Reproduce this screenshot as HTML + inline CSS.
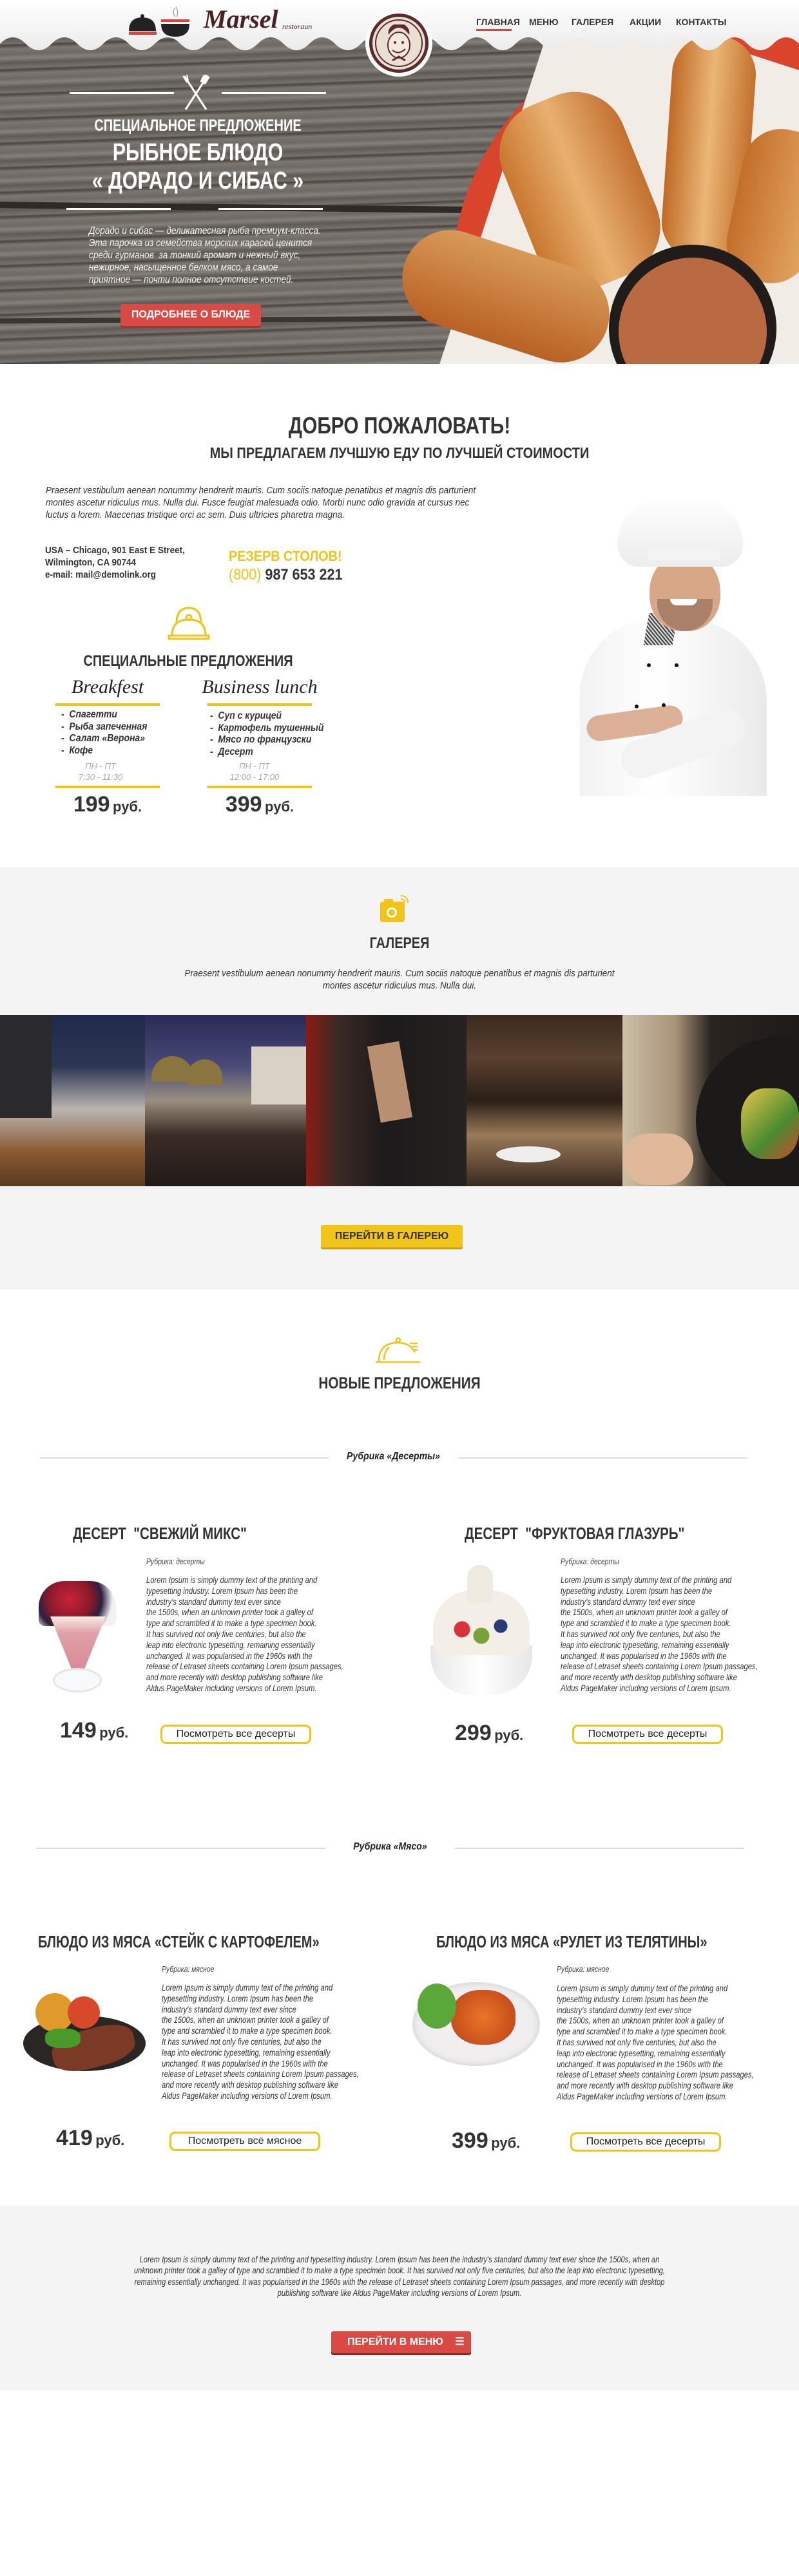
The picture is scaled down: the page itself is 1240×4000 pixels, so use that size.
<!DOCTYPE html>
<html><head><meta charset="utf-8">
<style>
*{margin:0;padding:0;box-sizing:border-box}
body{width:1240px;height:4000px;position:relative;background:#fff;font-family:"Liberation Sans Narrow","Liberation Sans",sans-serif;color:#333;overflow:hidden}
.a{position:absolute}
.c{text-align:center}
.b{font-weight:bold}
.i{font-style:italic}
.ttl{font-weight:bold;color:#333;white-space:nowrap}
.lorem{font-style:italic;font-size:14px;line-height:16.8px;color:#333;white-space:nowrap;transform:scaleX(.8);transform-origin:left top}
.btnY{border:3px solid #f0c419;border-radius:9px;font-size:16px;color:#222;text-align:center;line-height:24px;height:30px}
.price{font-weight:bold;color:#333;white-space:nowrap}
.price b{font-size:34px}
.price span{font-size:22px}
.rub{height:2px;background:#ddd}
.nl{transform-origin:left top}
.nc{transform-origin:center top}
</style></head><body>

<!-- HERO -->
<div class="a" style="left:0;top:0;width:1240px;height:565px;background:#726c66;overflow:hidden">
  <div class="a" style="inset:0;background:repeating-linear-gradient(178deg,#7d7771 0,#6f6963 9px,#858079 15px,#5f5a55 22px,#77716b 30px,#4a4540 33px,#7a746e 38px)"></div>
  <div class="a" style="left:0;top:318px;width:900px;height:10px;background:#2f2a26;transform:rotate(0.6deg)"></div>
  <div class="a" style="left:0;top:492px;width:900px;height:8px;background:#3a3531;transform:rotate(-0.3deg)"></div>
  <div class="a" style="left:700px;top:30px;width:820px;height:820px;border-radius:50%;background:#d8442c"></div>
  <div class="a" style="left:760px;top:60px;width:560px;height:620px;background:#f1ede6;transform:rotate(18deg)"></div>
  <div class="a" style="left:800px;top:145px;width:200px;height:300px;border-radius:80px;background:linear-gradient(90deg,#c9772e,#e8b070 50%,#c27030);transform:rotate(-22deg)"></div>
  <div class="a" style="left:1035px;top:55px;width:130px;height:350px;border-radius:60px;background:linear-gradient(90deg,#c06a26,#ebb676 50%,#c3702c);transform:rotate(4deg)"></div>
  <div class="a" style="left:1140px;top:200px;width:130px;height:240px;border-radius:60px;background:linear-gradient(90deg,#c46e2a,#e3a864);transform:rotate(12deg)"></div>
  <div class="a" style="left:620px;top:385px;width:330px;height:150px;border-radius:75px;background:linear-gradient(180deg,#d89a58,#b96124);transform:rotate(18deg)"></div>
  <div class="a" style="left:945px;top:380px;width:260px;height:260px;border-radius:50%;background:#1f1c1a"></div>
  <div class="a" style="left:960px;top:400px;width:230px;height:230px;border-radius:50%;background:#b96a42"></div>
</div>
<svg class="a" style="left:0;top:0" width="1240" height="90" viewBox="0 0 1240 90">
  <defs><linearGradient id="hg" x1="0" y1="0" x2="0" y2="1"><stop offset="0" stop-color="#fff"/><stop offset="1" stop-color="#ececec"/></linearGradient></defs>
  <path fill="url(#hg)" d="M0,68 Q20,48 40,68 T80,68 T120,68 T160,68 T200,68 T240,68 T280,68 T320,68 T360,68 T400,68 T440,68 T480,68 T520,68 T560,68 T600,68 T640,68 T680,68 T720,68 T760,68 T800,68 T840,68 T880,68 T920,68 T960,68 T1000,68 T1040,68 T1080,68 T1120,68 T1160,68 T1200,68 T1240,68 V0 H0 Z"/>
</svg>
<svg class="a" style="left:198px;top:8px" width="100" height="52" viewBox="0 0 100 52">
  <circle cx="23" cy="17" r="3" fill="#222"/>
  <path d="M2,40 Q2,19 23,19 Q44,19 44,40 Z" fill="#222"/>
  <rect x="2" y="41" width="43" height="5" fill="#d9443f"/>
  <rect x="52" y="22" width="44" height="4" fill="#d9443f"/>
  <path d="M52,29 H96 Q96,49 74,49 Q52,49 52,29 Z" fill="#222"/>
  <path d="M74,18 Q68,10 74,4 M76,18 Q80,11 75,3" stroke="#999" fill="none" stroke-width="1.2"/>
</svg>
<div class="a" style="left:316px;top:6px;font-family:'Liberation Serif',serif;font-style:italic;font-weight:bold;font-size:40px;color:#4a1f22">Marsel</div>
<div class="a" style="left:438px;top:34px;font-family:'Liberation Serif',serif;font-style:italic;font-size:12px;color:#4a1f22">restoraun</div>
<svg class="a" style="left:565px;top:14px" width="108" height="106" viewBox="0 0 108 106">
  <circle cx="54" cy="53" r="52" fill="#fff"/>
  <circle cx="54" cy="53" r="46" fill="#5a2a2e"/>
  <circle cx="54" cy="53" r="41" fill="#e9dfd3"/>
  <circle cx="54" cy="53" r="36" fill="none" stroke="#5a2a2e" stroke-width="2"/>
  <path d="M38,40 Q54,18 70,40 Q72,30 62,24 L46,24 Q36,30 38,40Z" fill="#5a2a2e"/>
  <ellipse cx="54" cy="56" rx="17" ry="20" fill="#f3e8db" stroke="#5a2a2e" stroke-width="2"/>
  <path d="M44,64 Q54,72 64,62" stroke="#5a2a2e" stroke-width="2" fill="none"/>
  <circle cx="48" cy="52" r="2" fill="#5a2a2e"/><circle cx="60" cy="52" r="2" fill="#5a2a2e"/>
  <path d="M44,80 L54,74 L64,80" stroke="#5a2a2e" stroke-width="3" fill="none"/>
</svg>
<div class="a b" style="left:739px;top:26px;font-size:14px;color:#333">ГЛАВНАЯ</div>
<div class="a" style="left:739px;top:45px;width:55px;height:3px;background:#d9443f"></div>
<div class="a b" style="left:821px;top:26px;font-size:14px;color:#333">МЕНЮ</div>
<div class="a b" style="left:887px;top:26px;font-size:14px;color:#333">ГАЛЕРЕЯ</div>
<div class="a b" style="left:977px;top:26px;font-size:14px;color:#333">АКЦИИ</div>
<div class="a b" style="left:1049px;top:26px;font-size:14px;color:#333">КОНТАКТЫ</div>

<div class="a" style="left:108px;top:143px;width:162px;height:3px;background:#fff"></div>
<div class="a" style="left:344px;top:143px;width:162px;height:3px;background:#fff"></div>
<svg class="a" style="left:282px;top:116px" width="44" height="56" viewBox="0 0 44 56">
  <path d="M4,2 L38,54 M40,2 L6,54" stroke="#fff" stroke-width="3"/>
  <path d="M2,2 L8,12 M8,0 L10,10" stroke="#fff" stroke-width="2"/>
  <rect x="31" y="0" width="10" height="14" rx="2" fill="#fff" transform="rotate(30 36 7)"/>
</svg>
<div class="a c nc" style="left:57px;top:181px;width:500px;font-size:25px;font-weight:bold;color:#fff;transform:scaleX(.8)">СПЕЦИАЛЬНОЕ ПРЕДЛОЖЕНИЕ</div>
<div class="a c nc" style="left:57px;top:216px;width:500px;font-size:38px;font-weight:bold;color:#fff;transform:scaleX(.8)">РЫБНОЕ БЛЮДО</div>
<div class="a c nc" style="left:57px;top:260px;width:500px;font-size:38px;font-weight:bold;color:#fff;transform:scaleX(.8)">« ДОРАДО И СИБАС »</div>
<div class="a" style="left:103px;top:323px;width:162px;height:3px;background:#fff"></div>
<div class="a" style="left:339px;top:323px;width:162px;height:3px;background:#fff"></div>
<div class="a i nl" style="left:138px;top:349px;font-size:15.5px;line-height:19px;color:#f2f2f2;white-space:nowrap;transform:scaleX(.88)">Дорадо и сибас — деликатесная рыба премиум-класса.<br>Эта парочка из семейства морских карасей ценится<br>среди гурманов&nbsp; за тонкий аромат и нежный вкус,<br>нежирное, насыщенное белком мясо, а самое<br>приятное — почти полное отсутствие костей.</div>
<div class="a c b" style="left:187px;top:472px;width:218px;height:34px;background:#d84a44;border-radius:3px;box-shadow:0 3px 0 #a8322e;color:#fff;font-size:16px;line-height:34px">ПОДРОБНЕЕ О БЛЮДЕ</div>

<!-- WELCOME -->
<div class="a c ttl nc" style="left:0;top:640px;width:1240px;font-size:36px;transform:scaleX(.83)">ДОБРО ПОЖАЛОВАТЬ!</div>
<div class="a c ttl nc" style="left:0;top:690px;width:1240px;font-size:23px;transform:scaleX(.87)">МЫ ПРЕДЛАГАЕМ ЛУЧШУЮ ЕДУ ПО ЛУЧШЕЙ СТОИМОСТИ</div>
<div class="a i nl" style="left:71px;top:753px;font-size:14.5px;line-height:19px;color:#333;white-space:nowrap;transform:scaleX(.93)">Praesent vestibulum aenean nonummy hendrerit mauris. Cum sociis natoque penatibus et magnis dis parturient<br>montes ascetur ridiculus mus. Nulla dui. Fusce feugiat malesuada odio. Morbi nunc odio gravida at cursus nec<br>luctus a lorem. Maecenas tristique orci ac sem. Duis ultricies pharetra magna.</div>
<div class="a b nl" style="left:70px;top:846px;font-size:14.5px;line-height:19px;color:#333;white-space:nowrap;transform:scaleX(.93)">USA – Chicago, 901 East E Street,<br>Wilmington, CA 90744<br>e-mail: mail@demolink.org</div>
<div class="a b nl" style="left:355px;top:851px;font-size:22px;color:#f0c419;white-space:nowrap;transform:scaleX(.9)">РЕЗЕРВ СТОЛОВ!</div>
<div class="a b nl" style="left:355px;top:879px;font-size:24px;color:#333;white-space:nowrap;transform:scaleX(.9)"><span style="color:#f0c419;font-weight:normal">(800)</span> 987 653 221</div>
<svg class="a" style="left:260px;top:940px" width="66" height="54" viewBox="0 0 66 54">
  <g fill="none" stroke="#f0c419" stroke-width="3">
    <path d="M14,28 Q14,4 33,4 Q52,4 52,28"/>
    <circle cx="33" cy="19" r="4"/>
    <path d="M7,47 Q7,22 33,22 Q59,22 59,47"/>
    <rect x="2" y="47" width="62" height="5"/>
  </g>
</svg>
<div class="a c ttl nc" style="left:92px;top:1013px;width:400px;font-size:24px;transform:scaleX(.83)">СПЕЦИАЛЬНЫЕ ПРЕДЛОЖЕНИЯ</div>
<div class="a c" style="left:86px;top:1050px;width:162px;font-family:'Liberation Serif',serif;font-style:italic;font-size:30px;color:#222">Breakfest</div>
<div class="a c" style="left:310px;top:1050px;width:186px;font-family:'Liberation Serif',serif;font-style:italic;font-size:30px;color:#222;white-space:nowrap">Business lunch</div>
<div class="a" style="left:86px;top:1092px;width:162px;height:4px;background:#f0c419"></div>
<div class="a" style="left:322px;top:1092px;width:162px;height:4px;background:#f0c419"></div>
<div class="a i b nl" style="left:95px;top:1101px;font-size:15.5px;line-height:18.7px;color:#333;white-space:nowrap;transform:scaleX(.9)">-&nbsp; Спагетти<br>-&nbsp; Рыба запеченная<br>-&nbsp; Салат «Верона»<br>-&nbsp; Кофе</div>
<div class="a i b nl" style="left:326px;top:1103px;font-size:15.5px;line-height:18.7px;color:#333;white-space:nowrap;transform:scaleX(.9)">-&nbsp; Суп с курицей<br>-&nbsp; Картофель тушенный<br>-&nbsp; Мясо по французски<br>-&nbsp; Десерт</div>
<div class="a c i" style="left:86px;top:1181px;width:140px;font-size:13px;line-height:17px;color:#aaa">ПН - ПТ<br>7:30 - 11:30</div>
<div class="a c i" style="left:322px;top:1181px;width:146px;font-size:13px;line-height:17px;color:#aaa">ПН - ПТ<br>12:00 - 17:00</div>
<div class="a" style="left:86px;top:1220px;width:162px;height:4px;background:#f0c419"></div>
<div class="a" style="left:322px;top:1220px;width:162px;height:4px;background:#f0c419"></div>
<div class="a c price" style="left:86px;top:1230px;width:162px"><b>199</b> <span>руб.</span></div>
<div class="a c price" style="left:322px;top:1230px;width:162px"><b>399</b> <span>руб.</span></div>
<!-- chef -->
<div class="a" style="left:900px;top:960px;width:290px;height:276px;background:linear-gradient(90deg,#f2f2f2,#fff 40%,#eaeaea);border-radius:120px 130px 0 0"></div>
<div class="a" style="left:1003px;top:952px;width:45px;height:50px;background:repeating-linear-gradient(45deg,#444 0 2px,#ddd 2px 4px);transform:skewX(-10deg)"></div>
<div class="a" style="left:1008px;top:858px;width:110px;height:122px;border-radius:50% 50% 45% 45%;background:#d7a787"></div>
<div class="a" style="left:1020px;top:930px;width:86px;height:50px;border-radius:0 0 45px 45px;background:#a9806a"></div>
<div class="a" style="left:1040px;top:930px;width:42px;height:10px;border-radius:0 0 20px 20px;background:#fff"></div>
<div class="a" style="left:958px;top:770px;width:195px;height:110px;border-radius:90px 90px 40px 40px;background:linear-gradient(180deg,#fff,#ececec)"></div>
<div class="a" style="left:1005px;top:852px;width:112px;height:18px;background:#f4f4f4"></div>
<div class="a" style="left:910px;top:1103px;width:150px;height:40px;border-radius:20px;background:#dcb096;transform:rotate(-8deg)"></div>
<div class="a" style="left:960px;top:1125px;width:200px;height:60px;border-radius:30px;background:#f3f3f3;transform:rotate(-20deg)"></div>
<div class="a" style="left:1004px;top:1030px;width:6px;height:6px;border-radius:50%;background:#111"></div>
<div class="a" style="left:1047px;top:1030px;width:6px;height:6px;border-radius:50%;background:#111"></div>
<div class="a" style="left:985px;top:1094px;width:6px;height:6px;border-radius:50%;background:#111"></div>
<div class="a" style="left:1027px;top:1092px;width:6px;height:6px;border-radius:50%;background:#111"></div>

<!-- GALLERY -->
<div class="a" style="left:0;top:1346px;width:1240px;height:656px;background:#f4f4f4"></div>
<svg class="a" style="left:588px;top:1390px" width="46" height="44" viewBox="0 0 46 44">
  <rect x="2" y="10" width="38" height="32" rx="4" fill="#f0c419"/>
  <rect x="8" y="6" width="14" height="6" rx="2" fill="#f0c419"/>
  <circle cx="20" cy="27" r="8" fill="#fff"/><circle cx="20" cy="27" r="5" fill="#f0c419"/>
  <path d="M34,6 Q40,6 40,12 M34,1 Q45,1 45,12" stroke="#f0c419" stroke-width="2" fill="none"/>
</svg>
<div class="a c ttl nc" style="left:0;top:1451px;width:1240px;font-size:24px;transform:scaleX(.83)">ГАЛЕРЕЯ</div>
<div class="a c i nc" style="left:0;top:1503px;width:1240px;font-size:14.5px;line-height:19px;color:#333;transform:scaleX(.93)">Praesent vestibulum aenean nonummy hendrerit mauris. Cum sociis natoque penatibus et magnis dis parturient<br>montes ascetur ridiculus mus. Nulla dui.</div>
<div class="a" style="left:0;top:1576px;width:225px;height:266px;background:linear-gradient(180deg,#1e2a4a 0,#2d3554 30%,#b9b5b0 55%,#8a5a32 80%,#5a3a20)"></div>
<div class="a" style="left:0;top:1576px;width:80px;height:160px;background:#2a2a2e"></div>
<div class="a" style="left:225px;top:1576px;width:250px;height:266px;background:linear-gradient(180deg,#2a2a55 0,#4a4a78 30%,#9a8f80 50%,#3a2c26 70%,#201a18)"></div>
<div class="a" style="left:235px;top:1640px;width:65px;height:40px;border-radius:40px 40px 0 0;background:#8a7440"></div>
<div class="a" style="left:290px;top:1645px;width:55px;height:40px;border-radius:40px 40px 0 0;background:#8a7440"></div>
<div class="a" style="left:390px;top:1625px;width:85px;height:90px;background:#d8d2c6"></div>
<div class="a" style="left:475px;top:1576px;width:249px;height:266px;background:linear-gradient(90deg,#8a1c14 0,#3a2a26 20%,#1c1a1a 50%,#252220 100%)"></div>
<div class="a" style="left:580px;top:1620px;width:50px;height:120px;background:#b98f72;transform:rotate(-10deg)"></div>
<div class="a" style="left:724px;top:1576px;width:242px;height:266px;background:linear-gradient(180deg,#3a2a1e 0,#5a4030 25%,#2a1e16 50%,#9a7a58 70%,#3a2a20)"></div>
<div class="a" style="left:770px;top:1780px;width:100px;height:25px;border-radius:50%;background:#eee"></div>
<div class="a" style="left:966px;top:1576px;width:274px;height:266px;overflow:hidden;background:linear-gradient(90deg,#cbbfa8 0,#a99478 30%,#2a2420 50%,#1e1a18)">
  <div class="a" style="left:114px;top:34px;width:260px;height:260px;border-radius:50%;background:#1c1a18"></div>
  <div class="a" style="left:184px;top:114px;width:90px;height:110px;border-radius:40%;background:linear-gradient(135deg,#e8c84a,#4a8a30 60%,#c84a2a)"></div>
  <div class="a" style="left:0;top:184px;width:110px;height:80px;border-radius:40px;background:#e0b89a"></div>
</div>
<div class="a c b" style="left:498px;top:1902px;width:220px;height:35px;background:#f0c419;border-radius:3px;box-shadow:0 3px 0 #c99f0e;font-size:16px;line-height:35px;color:#333">ПЕРЕЙТИ В ГАЛЕРЕЮ</div>

<!-- NEW OFFERS -->
<svg class="a" style="left:582px;top:2076px" width="74" height="42" viewBox="0 0 74 42">
  <g fill="none" stroke="#f0c419" stroke-width="2.5">
    <circle cx="36" cy="5" r="3"/>
    <path d="M6,38 Q6,9 36,9 Q54,9 62,24"/>
    <path d="M14,36 Q14,22 22,16"/>
    <path d="M1,39 H70"/>
    <path d="M54,10 H66 M58,15 H66 M61,20 H66"/>
  </g>
</svg>
<div class="a c ttl nc" style="left:0;top:2134px;width:1240px;font-size:25px;transform:scaleX(.83)">НОВЫЕ ПРЕДЛОЖЕНИЯ</div>

<div class="a rub" style="left:62px;top:2263px;width:448px"></div>
<div class="a rub" style="left:711px;top:2263px;width:449px"></div>
<div class="a i b c nc" style="left:510px;top:2253px;width:201px;font-size:16px;color:#222;transform:scaleX(.88)">Рубрика «Десерты»</div>

<div class="a ttl nl" style="left:113px;top:2366px;font-size:26px;transform:scaleX(.79)">ДЕСЕРТ &nbsp;"СВЕЖИЙ МИКС"</div>
<div class="a ttl nl" style="left:721px;top:2366px;font-size:26px;transform:scaleX(.79)">ДЕСЕРТ &nbsp;"ФРУКТОВАЯ ГЛАЗУРЬ"</div>

<div class="a" style="left:60px;top:2455px;width:120px;height:70px;border-radius:40px 40px 10px 10px;background:radial-gradient(circle at 40% 40%,#c8243a,#8a1a2a 40%,#2a2040 60%,#f2f2f2 80%)"></div>
<div class="a" style="left:78px;top:2510px;width:86px;height:85px;background:linear-gradient(180deg,#f6eee4,#e0a0a8 30%,#d78a96);clip-path:polygon(0 0,100% 0,60% 100%,40% 100%)"></div>
<div class="a" style="left:82px;top:2590px;width:76px;height:38px;border-radius:50%;border:3px solid #e2e6ea;background:#f7f9fa"></div>
<div class="a i nl" style="left:227px;top:2417px;font-size:13px;color:#444;transform:scaleX(.8)">Рубрика: десерты</div>
<div class="a lorem" style="left:227px;top:2445px">Lorem Ipsum is simply dummy text of the printing and<br>typesetting industry. Lorem Ipsum has been the<br>industry's standard dummy text ever since<br>the 1500s, when an unknown printer took a galley of<br>type and scrambled it to make a type specimen book.<br>It has survived not only five centuries, but also the<br>leap into electronic typesetting, remaining essentially<br>unchanged. It was popularised in the 1960s with the<br>release of Letraset sheets containing Lorem Ipsum passages,<br>and more recently with desktop publishing software like<br>Aldus PageMaker including versions of Lorem Ipsum.</div>
<div class="a" style="left:668px;top:2555px;width:158px;height:76px;border-radius:0 0 60px 60px;background:linear-gradient(90deg,#e8e8e8,#fff 50%,#e6e6e6)"></div>
<div class="a" style="left:672px;top:2470px;width:150px;height:100px;border-radius:60px 60px 20px 20px;background:radial-gradient(circle at 30% 60%,#d8323a 0 12px,transparent 13px),radial-gradient(circle at 70% 55%,#2a3a78 0 10px,transparent 11px),radial-gradient(circle at 50% 70%,#7aa23a 0 12px,transparent 13px),#f3efe6"></div>
<div class="a" style="left:725px;top:2430px;width:40px;height:60px;border-radius:20px 20px 10px 10px;background:#efeadf"></div>
<div class="a i nl" style="left:870px;top:2417px;font-size:13px;color:#444;transform:scaleX(.8)">Рубрика: десерты</div>
<div class="a lorem" style="left:870px;top:2445px">Lorem Ipsum is simply dummy text of the printing and<br>typesetting industry. Lorem Ipsum has been the<br>industry's standard dummy text ever since<br>the 1500s, when an unknown printer took a galley of<br>type and scrambled it to make a type specimen book.<br>It has survived not only five centuries, but also the<br>leap into electronic typesetting, remaining essentially<br>unchanged. It was popularised in the 1960s with the<br>release of Letraset sheets containing Lorem Ipsum passages,<br>and more recently with desktop publishing software like<br>Aldus PageMaker including versions of Lorem Ipsum.</div>

<div class="a price" style="left:93px;top:2668px"><b>149</b> <span>руб.</span></div>
<div class="a btnY" style="left:249px;top:2678px;width:234px">Посмотреть все десерты</div>
<div class="a price" style="left:706px;top:2672px"><b>299</b> <span>руб.</span></div>
<div class="a btnY" style="left:888px;top:2678px;width:234px">Посмотреть все десерты</div>

<!-- MEAT -->
<div class="a rub" style="left:56px;top:2869px;width:449px"></div>
<div class="a rub" style="left:706px;top:2869px;width:449px"></div>
<div class="a i b c nc" style="left:505px;top:2859px;width:201px;font-size:16px;color:#222;transform:scaleX(.88)">Рубрика «Мясо»</div>

<div class="a ttl nl" style="left:59px;top:3000px;font-size:26px;transform:scaleX(.77)">БЛЮДО ИЗ МЯСА «СТЕЙК С КАРТОФЕЛЕМ»</div>
<div class="a ttl nl" style="left:677px;top:3000px;font-size:26px;transform:scaleX(.77)">БЛЮДО ИЗ МЯСА «РУЛЕТ ИЗ ТЕЛЯТИНЫ»</div>

<div class="a" style="left:36px;top:3130px;width:190px;height:86px;border-radius:50%;background:#2a2624"></div>
<div class="a" style="left:80px;top:3150px;width:130px;height:60px;border-radius:40%;background:#7a3a26;transform:rotate(-15deg)"></div>
<div class="a" style="left:55px;top:3095px;width:60px;height:60px;border-radius:50%;background:#e09a2a"></div>
<div class="a" style="left:105px;top:3100px;width:50px;height:50px;border-radius:50%;background:#d8482a"></div>
<div class="a" style="left:70px;top:3150px;width:55px;height:30px;border-radius:40%;background:#4a9a2a"></div>
<div class="a i nl" style="left:251px;top:3050px;font-size:13px;color:#444;transform:scaleX(.8)">Рубрика: мясное</div>
<div class="a lorem" style="left:251px;top:3078px">Lorem Ipsum is simply dummy text of the printing and<br>typesetting industry. Lorem Ipsum has been the<br>industry's standard dummy text ever since<br>the 1500s, when an unknown printer took a galley of<br>type and scrambled it to make a type specimen book.<br>It has survived not only five centuries, but also the<br>leap into electronic typesetting, remaining essentially<br>unchanged. It was popularised in the 1960s with the<br>release of Letraset sheets containing Lorem Ipsum passages,<br>and more recently with desktop publishing software like<br>Aldus PageMaker including versions of Lorem Ipsum.</div>

<div class="a" style="left:640px;top:3078px;width:198px;height:130px;border-radius:50%;background:#f0eeee;box-shadow:inset 0 0 12px #ccc"></div>
<div class="a" style="left:700px;top:3090px;width:100px;height:85px;border-radius:45%;background:radial-gradient(circle,#e8762a,#c9501c 70%)"></div>
<div class="a" style="left:648px;top:3080px;width:60px;height:70px;border-radius:50%;background:#5aa83a"></div>
<div class="a i nl" style="left:864px;top:3050px;font-size:13px;color:#444;transform:scaleX(.8)">Рубрика: мясное</div>
<div class="a lorem" style="left:864px;top:3079px">Lorem Ipsum is simply dummy text of the printing and<br>typesetting industry. Lorem Ipsum has been the<br>industry's standard dummy text ever since<br>the 1500s, when an unknown printer took a galley of<br>type and scrambled it to make a type specimen book.<br>It has survived not only five centuries, but also the<br>leap into electronic typesetting, remaining essentially<br>unchanged. It was popularised in the 1960s with the<br>release of Letraset sheets containing Lorem Ipsum passages,<br>and more recently with desktop publishing software like<br>Aldus PageMaker including versions of Lorem Ipsum.</div>

<div class="a price" style="left:87px;top:3301px"><b>419</b> <span>руб.</span></div>
<div class="a btnY" style="left:263px;top:3310px;width:234px">Посмотреть всё мясное</div>
<div class="a price" style="left:701px;top:3305px"><b>399</b> <span>руб.</span></div>
<div class="a btnY" style="left:885px;top:3311px;width:234px">Посмотреть все десерты</div>

<!-- FOOTER BAND -->
<div class="a" style="left:0;top:3425px;width:1240px;height:287px;background:#f4f4f4"></div>
<div class="a c i nc" style="left:115px;top:3500px;width:1010px;font-size:13.5px;line-height:17.3px;color:#333;transform:scaleX(.82)">Lorem Ipsum is simply dummy text of the printing and typesetting industry. Lorem Ipsum has been the industry's standard dummy text ever since the 1500s, when an unknown printer took a galley of type and scrambled it to make a type specimen book. It has survived not only five centuries, but also the leap into electronic typesetting, remaining essentially unchanged. It was popularised in the 1960s with the release of Letraset sheets containing Lorem Ipsum passages, and more recently with desktop publishing software like Aldus PageMaker including versions of Lorem Ipsum.</div>
<div class="a b" style="left:514px;top:3620px;width:217px;height:34px;background:#d84a44;border-radius:3px;box-shadow:0 3px 0 #8a2a26;color:#fff;font-size:16px;line-height:34px;padding-left:25px">ПЕРЕЙТИ В МЕНЮ <span style="margin-left:14px">☰</span></div>

</body></html>
